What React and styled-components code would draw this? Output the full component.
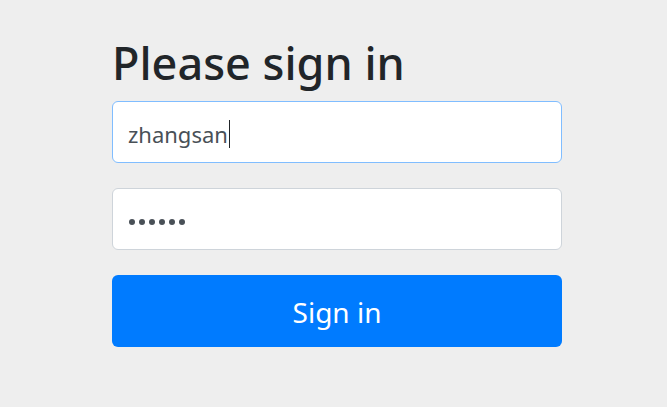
import React from 'react'
import styled, { createGlobalStyle } from 'styled-components'

const Global = createGlobalStyle`
  html, body {
    margin: 0;
    background: #eeeeee;
  }
  body {
    font-family: 'Noto Sans', 'Open Sans', sans-serif;
  }
`

const Page = styled.div`
  display: flex;
  justify-content: center;
  padding: 33px 0 0 7px;
`

const Form = styled.form`
  width: 450px;
  display: flex;
  flex-direction: column;
`

const Heading = styled.h2`
  margin: 0 0 8px;
  font-size: 45px;
  font-weight: 500;
  line-height: 60px;
  color: #212529;
`

const Field = styled.div`
  box-sizing: border-box;
  height: 62px;
  margin-bottom: 25px;
  padding: 3px 15px 0;
  display: flex;
  align-items: center;
  background: #fff;
  border: 1px solid ${({ $focused }) => ($focused ? '#80bdff' : '#ced4da')};
  border-radius: 6px;
  font-size: 22px;
  color: #495057;
`

const Caret = styled.span`
  display: inline-block;
  width: 1px;
  height: 28px;
  margin-left: 1px;
  background: #212529;
`

const Dots = styled.span`
  display: flex;
  gap: 4px;
  padding: 2px 0 0 1px;
`

const Dot = styled.span`
  width: 6px;
  height: 6px;
  border-radius: 50%;
  background: #495057;
`

const Button = styled.button`
  height: 72px;
  border: 0;
  border-radius: 6px;
  background: #007bff;
  color: #fff;
  font-family: inherit;
  font-size: 28px;
  padding: 2px 0 0;
`

export default () => (
  <>
    <Global />
    <Page>
      <Form onSubmit={e => e.preventDefault()}>
        <Heading>Please sign in</Heading>
        <Field $focused>
          zhangsan
          <Caret />
        </Field>
        <Field aria-label='password'>
          <Dots>
            {[0, 1, 2, 3, 4, 5].map(i => <Dot key={i} />)}
          </Dots>
        </Field>
        <Button type='submit'>Sign in</Button>
      </Form>
    </Page>
  </>
)
